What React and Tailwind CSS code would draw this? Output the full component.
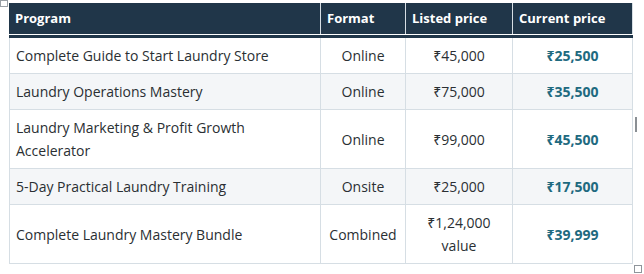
import React from 'react';

const rows = [
  { name: 'Complete Guide to Start Laundry Store', format: 'Online', listed: ['₹45,000'], current: '₹25,500' },
  { name: 'Laundry Operations Mastery', format: 'Online', listed: ['₹75,000'], current: '₹35,500' },
  { name: 'Laundry Marketing & Profit Growth Accelerator', format: 'Online', listed: ['₹99,000'], current: '₹45,500' },
  { name: '5-Day Practical Laundry Training', format: 'Onsite', listed: ['₹25,000'], current: '₹17,500' },
  { name: 'Complete Laundry Mastery Bundle', format: 'Combined', listed: ['₹1,24,000', 'value'], current: '₹39,999' },
];

const grid = 'grid grid-cols-[312px_85px_107px_120px]';

export default function App() {
  return (
    <div className="relative w-[644px] h-[274px] bg-white text-[#2a2f33] overflow-hidden" style={{ fontFamily: '"Open Sans", "Noto Sans", sans-serif' }}>
      <div className="absolute left-0 top-0 w-[8px] h-[7px] border border-[#9aa0a6] bg-white" />
      <div className="absolute left-[634px] top-[265px] w-[8px] h-[8px] border border-[#8f959b] bg-white" />
      <div className="absolute left-[635px] top-[117px] w-[2px] h-[15px] bg-[#8a8f94]" />

      <div className="ml-[9px] mt-[3px] w-[624px] text-[14px]">
        <div className={`${grid} bg-[#203649] text-white font-bold text-[13px]`}>
          <div className="h-[31px] flex items-center px-[6px] border-r border-[#d6dee4]">Program</div>
          <div className="h-[31px] flex items-center px-[6px] border-r border-[#d6dee4]">Format</div>
          <div className="h-[31px] flex items-center px-[6px] border-r border-[#d6dee4]">Listed price</div>
          <div className="h-[31px] flex items-center px-[6px] border-r border-[#d6dee4]">Current price</div>
        </div>
        <div className="h-[1px] bg-white" />
        <div className="h-[3px] bg-[#203649]" />
        {rows.map((r, i) => (
          <div key={i} className={`${grid} ${i % 2 === 1 ? 'bg-[#f4f6f8]' : 'bg-white'} leading-[23px]`}>
            <div className="flex items-center px-[6px] py-[6px] border-l border-r border-b border-[#d6dee4]">{r.name}</div>
            <div className="flex items-center justify-center px-[4px] py-[6px] border-r border-b border-[#d6dee4]">{r.format}</div>
            <div className="flex flex-col items-center justify-center px-[4px] py-[6px] border-r border-b border-[#d6dee4]">
              {r.listed.map((t) => <span key={t}>{t}</span>)}
            </div>
            <div className="flex items-center justify-center px-[4px] py-[6px] border-r border-b border-[#d6dee4] font-bold text-[#1e6a7f]">{r.current}</div>
          </div>
        ))}
      </div>
    </div>
  );
}
